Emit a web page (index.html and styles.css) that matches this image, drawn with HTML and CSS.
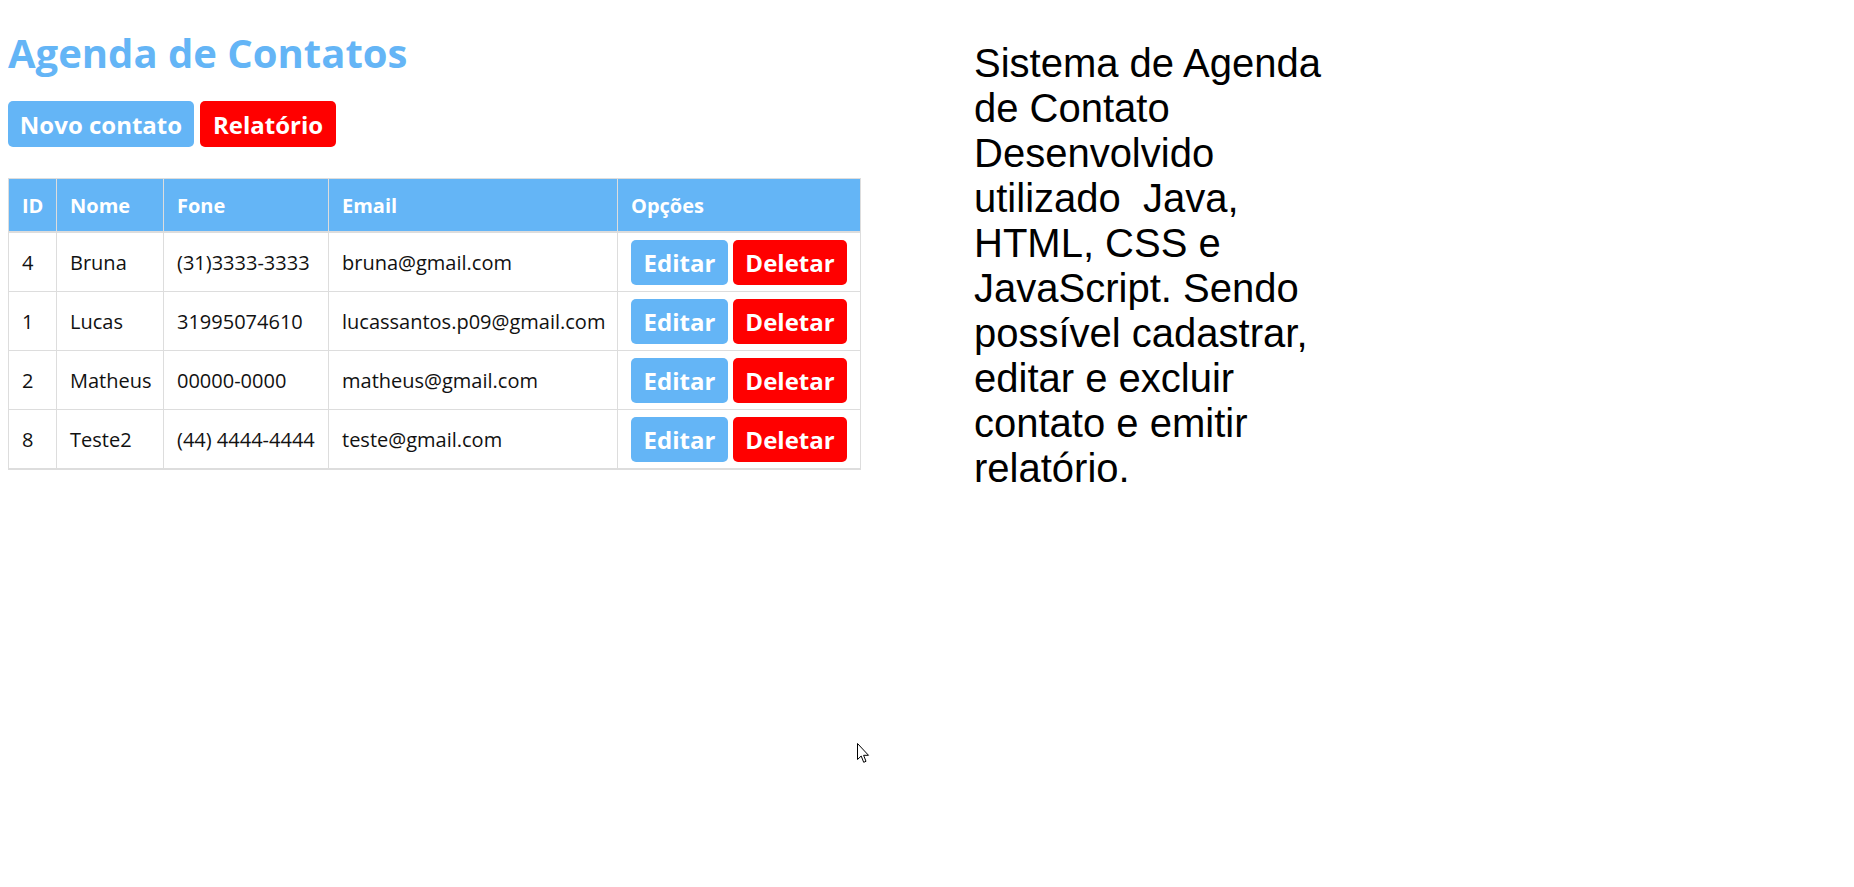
FILE: index.html
```html
<!DOCTYPE html>
<html lang="pt-BR">
<head>
<meta charset="utf-8">
<title>Agenda de Contatos</title>
<link rel="stylesheet" href="styles.css">
</head>
<body>
<div class="main">
  <h1 class="title">Agenda de Contatos</h1>
  <div class="actions">
    <button class="btn btn-blue">Novo contato</button>
    <button class="btn btn-red">Relatório</button>
  </div>
  <table class="contacts">
    <colgroup>
      <col class="c-id"><col class="c-nome"><col class="c-fone"><col class="c-email"><col class="c-op">
    </colgroup>
    <thead>
      <tr><th>ID</th><th>Nome</th><th>Fone</th><th>Email</th><th>Opções</th></tr>
    </thead>
    <tbody>
      <tr><td>4</td><td>Bruna</td><td>(31)3333-3333</td><td>bruna@gmail.com</td><td class="ops"><button class="btn sm btn-blue">Editar</button><button class="btn sm btn-red">Deletar</button></td></tr>
      <tr><td>1</td><td>Lucas</td><td>31995074610</td><td>lucassantos.p09@gmail.com</td><td class="ops"><button class="btn sm btn-blue">Editar</button><button class="btn sm btn-red">Deletar</button></td></tr>
      <tr><td>2</td><td>Matheus</td><td>00000-0000</td><td>matheus@gmail.com</td><td class="ops"><button class="btn sm btn-blue">Editar</button><button class="btn sm btn-red">Deletar</button></td></tr>
      <tr><td>8</td><td>Teste2</td><td>(44) 4444-4444</td><td>teste@gmail.com</td><td class="ops"><button class="btn sm btn-blue">Editar</button><button class="btn sm btn-red">Deletar</button></td></tr>
    </tbody>
  </table>
</div>
<p class="about">Sistema de Agenda de Contato Desenvolvido utilizado&nbsp; Java, HTML, CSS e JavaScript. Sendo possível cadastrar, editar e excluir contato e emitir relatório.</p>
<svg class="cursor" width="13" height="21" viewBox="0 0 13 21"><path d="M0.5 0.5 L0.5 16.5 L4.2 13 L6.7 19.3 L9 18.3 L6.6 12.3 L11.5 12.3 Z" fill="#fff" stroke="#000" stroke-width="1"/></svg>
</body>
</html>
```
FILE: styles.css
```css
html, body { background: #fff; }
body {
  margin: 8px;
  display: flex;
  align-items: flex-start;
  font-family: "Open Sans", "Noto Sans", sans-serif;
  color: #222;
}
.main { width: 852px; flex: none; }
.title {
  margin: 18px 0 0;
  font-size: 40px;
  line-height: 54px;
  font-weight: 700;
  color: #64b5f6;
}
.actions { display: flex; gap: 6px; margin-top: 21px; }
.btn {
  border: none;
  border-radius: 5px;
  color: #fff;
  font-family: "Open Sans", sans-serif;
  font-weight: 700;
  font-size: 24px;
  height: 46px;
  padding: 0;
  cursor: pointer;
}
.actions .btn-blue { width: 186px; }
.actions .btn-red { width: 136px; }
.btn-blue { background: #64b5f6; }
.btn-red { background: #ff0000; }
.contacts {
  margin-top: 31px;
  width: 852px;
  table-layout: fixed;
  border-collapse: collapse;
  border: 1px solid #ddd;
  border-bottom: 2px solid #ddd;
}
.c-id { width: 48px; }
.c-nome { width: 107px; }
.c-fone { width: 165px; }
.c-email { width: 289px; }
.c-op { width: 243px; }
.contacts th {
  background: #64b5f6;
  color: #fff;
  text-align: left;
  height: 52px;
  padding: 0 13px;
  font-size: 20px;
  font-weight: 700;
  border: 1px solid #ddd;
  border-bottom: 2px solid #ddd;
}
.contacts td {
  height: 58px;
  padding: 0 13px;
  font-size: 20px;
  border: 1px solid #ddd;
  color: #111;
  white-space: nowrap;
}
.ops .btn { height: 45px; font-size: 24px; padding: 0; vertical-align: middle; }
.ops .btn-blue { width: 97px; margin-right: 5px; }
.ops .btn-red { width: 114px; }
.about {
  margin: 33px 0 0 114px;
  width: 370px;
  font-family: "Liberation Sans", Arial, sans-serif;
  font-size: 40px;
  line-height: 45px;
  color: #000;
}
.cursor { position: absolute; left: 857px; top: 743px; }
```
